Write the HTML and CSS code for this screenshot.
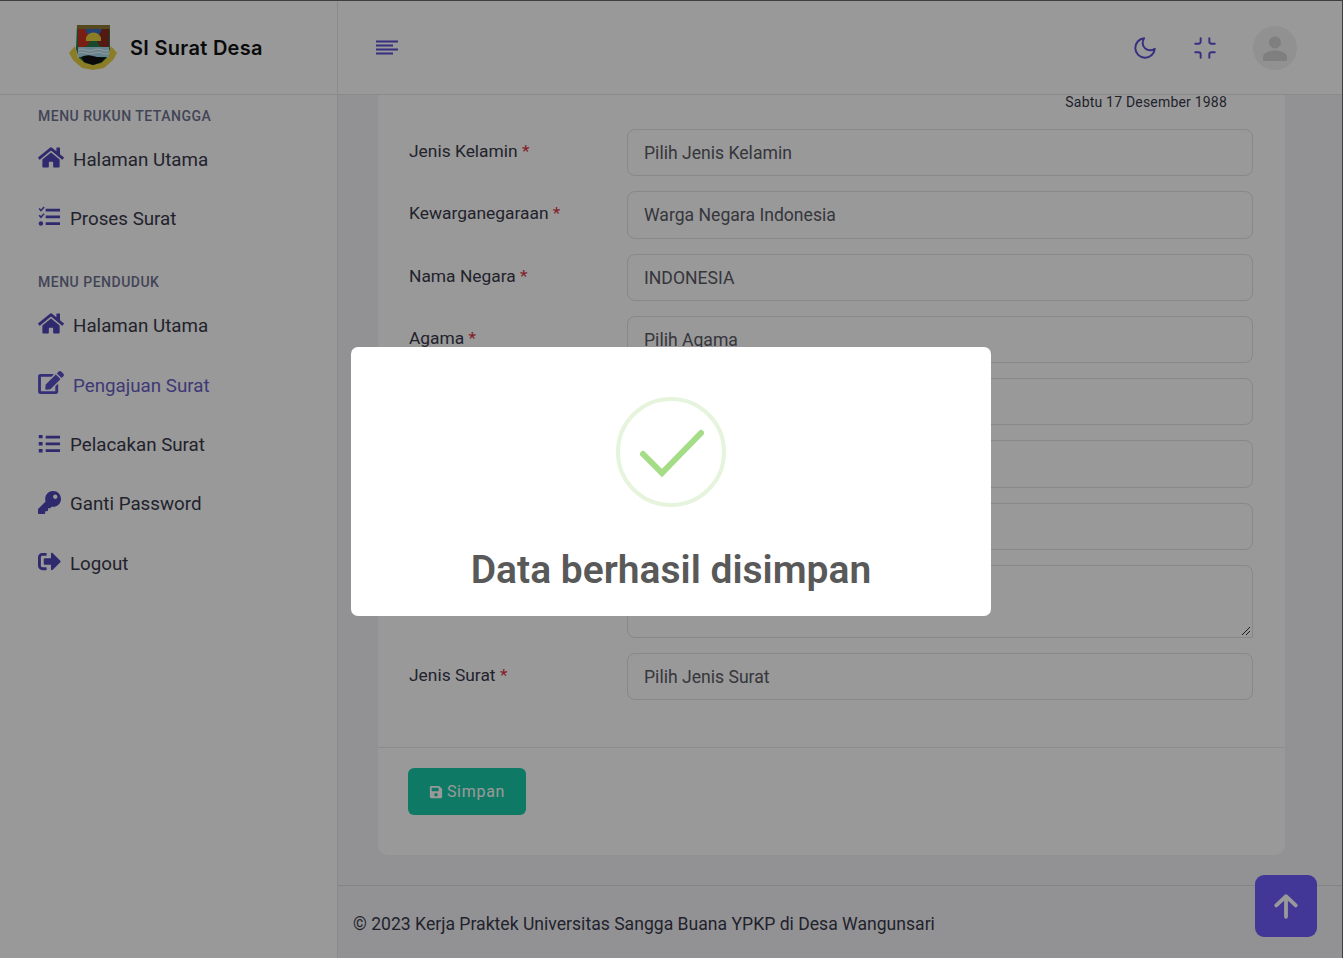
FILE: index.html
```html
<!DOCTYPE html>
<html lang="id">
<head>
<meta charset="utf-8">
<title>SI Surat Desa</title>
<link rel="stylesheet" href="styles.css">
</head>
<body>
<div class="app">
  <header class="topbar">
    <div class="brand">
      <svg class="crest" viewBox="0 0 50 48" width="50" height="48">
        <path d="M1 29l6-7 3 12 30 0 3-12 6 7-4 7-9 8-11 2-11-2-9-8z" fill="#e6d040"/>
        <path d="M9 1h33v24l-3 9-6 5-8 2-8-2-6-5-3-9z" fill="#2a7a4c"/>
        <path d="M9 1h33v4H9z" fill="#8a7a30"/>
        <path d="M10 5h8l6 9-5 8-9 3z" fill="#c8321e"/>
        <path d="M41 5h-8l-6 9 5 8 9 3z" fill="#8c2a1e"/>
        <path d="M17 5h17l-4 8H21z" fill="#3a6ec0"/>
        <path d="M18 15a7 6 0 0 1 15 0v2H18z" fill="#e8d040"/>
        <path d="M10 23h31v10H10z" fill="#a8dcec"/>
        <path d="M10 26q4-2 8 0t8 0 8 0 7 0M10 29q4-2 8 0t8 0 8 0 7 0" stroke="#fff" fill="none"/>
        <path d="M13 33q6-3 12-1t13 1l-4 5-9 3-9-3z" fill="#111"/>
      </svg>
      <span class="brand-name">SI Surat Desa</span>
    </div>
    <div class="topbar-main">
      <button class="icon-btn" aria-label="Menu">
        <svg width="22" height="24" viewBox="0 0 22 24" fill="none" stroke="#5b4fd6" stroke-width="2"><path d="M0 5.500h22M0 9.500h17M0 13.500h22M0 17.500h17"/></svg>
      </button>
      <div class="topbar-actions">
        <svg width="26" height="26" viewBox="0 0 24 24" fill="none" stroke="#5b4fd6" stroke-width="1.800" stroke-linecap="round" stroke-linejoin="round"><path d="M21 12.790A9 9 0 1 1 11.210 3 7 7 0 0 0 21 12.790z"/></svg>
        <svg width="26" height="26" viewBox="0 0 24 24" fill="none" stroke="#5b4fd6" stroke-width="1.800" stroke-linecap="round" stroke-linejoin="round"><path d="M8 3v3a2 2 0 0 1-2 2H3M21 8h-3a2 2 0 0 1-2-2V3M3 16h3a2 2 0 0 1 2 2v3M16 21v-3a2 2 0 0 1 2-2h3"/></svg>
        <span class="avatar">
          <svg width="28" height="28" viewBox="0 0 28 28" fill="#d4d4d4"><circle cx="14" cy="8.500" r="6"/><path d="M2 27v-4c0-4 6-6.500 12-6.500s12 2.500 12 6.500v4z"/></svg>
        </span>
      </div>
    </div>
  </header>

  <div class="body-row">
    <aside class="sidebar">
      <div class="menu-title first">MENU RUKUN TETANGGA</div>
      <a class="menu-item wide item-a">
        <svg class="mi" viewBox="0 0 576 512" width="26" height="23"><path d="M280.370 148.260L96 300.110V464a16 16 0 0 0 16 16l112.060-.290a16 16 0 0 0 15.920-16V368a16 16 0 0 1 16-16h64a16 16 0 0 1 16 16v95.640a16 16 0 0 0 16 16.050L464 480a16 16 0 0 0 16-16V300L295.670 148.260a12.190 12.190 0 0 0-15.300 0zM571.600 251.470L488 182.560V44.050a12 12 0 0 0-12-12h-56a12 12 0 0 0-12 12v72.610L318.470 43a48 48 0 0 0-61 0L4.340 251.470a12 12 0 0 0-1.600 16.900l25.500 31A12 12 0 0 0 45.150 301l235.220-193.740a12.190 12.190 0 0 1 15.300 0L530.900 301a12 12 0 0 0 16.900-1.600l25.500-31a12 12 0 0 0-1.700-16.930z"/></svg>
        <span>Halaman Utama</span>
      </a>
      <a class="menu-item item-b">
        <svg class="mi" viewBox="0 0 24 24" width="23" height="23"><path d="M8 4h15v2.800H8zM8 11h15v2.800H8zM8 18h15v2.800H8z"/><circle cx="3" cy="19.300" r="2.300"/><path d="M.6 4.200l1.200-1 1.300 1.400L5.800 1.500l1.200 1-3.900 4.500zM.6 11.200l1.200-1 1.300 1.400 2.700-3.100 1.200 1-3.900 4.500z"/></svg>
        <span>Proses Surat</span>
      </a>
      <div class="menu-title second">MENU PENDUDUK</div>
      <a class="menu-item wide item-a">
        <svg class="mi" viewBox="0 0 576 512" width="26" height="23"><path d="M280.370 148.260L96 300.110V464a16 16 0 0 0 16 16l112.060-.290a16 16 0 0 0 15.920-16V368a16 16 0 0 1 16-16h64a16 16 0 0 1 16 16v95.640a16 16 0 0 0 16 16.050L464 480a16 16 0 0 0 16-16V300L295.670 148.260a12.190 12.190 0 0 0-15.300 0zM571.600 251.470L488 182.560V44.050a12 12 0 0 0-12-12h-56a12 12 0 0 0-12 12v72.610L318.470 43a48 48 0 0 0-61 0L4.340 251.470a12 12 0 0 0-1.600 16.900l25.500 31A12 12 0 0 0 45.150 301l235.220-193.740a12.190 12.190 0 0 1 15.300 0L530.900 301a12 12 0 0 0 16.900-1.600l25.500-31a12 12 0 0 0-1.700-16.930z"/></svg>
        <span>Halaman Utama</span>
      </a>
      <a class="menu-item wide active">
        <svg class="mi" viewBox="0 0 576 512" width="26" height="23"><path d="M402.600 83.200l90.200 90.200c3.800 3.800 3.800 10 0 13.800L274.400 405.600l-92.800 10.300c-12.400 1.400-22.900-9.100-21.500-21.500l10.300-92.800L388.800 83.200c3.800-3.800 10-3.800 13.800 0zm162-22.900l-48.800-48.800c-15.200-15.200-39.900-15.200-55.200 0l-35.400 35.400c-3.800 3.800-3.800 10 0 13.800l90.200 90.200c3.800 3.800 10 3.800 13.800 0l35.400-35.400c15.200-15.300 15.200-40 0-55.200zM384 346.200V448H64V128h229.800c3.200 0 6.200-1.300 8.500-3.500l40-40c7.600-7.600 2.200-20.500-8.500-20.500H48C21.500 64 0 85.500 0 112v352c0 26.500 21.500 48 48 48h352c26.500 0 48-21.500 48-48V306.200c0-10.700-12.900-16-20.500-8.500l-40 40c-2.200 2.300-3.500 5.300-3.500 8.500z"/></svg>
        <span>Pengajuan Surat</span>
      </a>
      <a class="menu-item item-b">
        <svg class="mi" viewBox="0 0 24 24" width="23" height="23"><path d="M8 4h15v2.800H8zM8 11h15v2.800H8zM8 18h15v2.800H8z"/><path d="M.8 3h4v3.600h-4zM.8 10.400h4V14h-4zM.8 17.700h4v3.600h-4z"/></svg>
        <span>Pelacakan Surat</span>
      </a>
      <a class="menu-item item-b">
        <svg class="mi" viewBox="0 0 512 512" width="23" height="23"><path d="M512 176.001C512 273.203 433.202 352 336 352c-11.220 0-22.190-1.062-32.827-3.069l-24.012 27.014A23.999 23.999 0 0 1 261.223 384H224v40c0 13.255-10.745 24-24 24h-40v40c0 13.255-10.745 24-24 24H24c-13.255 0-24-10.745-24-24v-78.059c0-6.365 2.529-12.470 7.029-16.971l161.802-161.802C163.108 213.814 160 195.271 160 176 160 78.798 238.797.001 335.999 0 433.488-.001 512 78.511 512 176.001zM336 128c0 26.510 21.490 48 48 48s48-21.490 48-48-21.490-48-48-48-48 21.490-48 48z"/></svg>
        <span>Ganti Password</span>
      </a>
      <a class="menu-item item-b">
        <svg class="mi" viewBox="0 0 512 512" width="23" height="23"><path d="M497 273L329 441c-15 15-41 4.500-41-17v-96H152c-13.300 0-24-10.700-24-24v-96c0-13.300 10.700-24 24-24h136V88c0-21.400 25.900-32 41-17l168 168c9.300 9.400 9.300 24.600 0 34zM192 436v-40c0-6.600-5.400-12-12-12H96c-17.700 0-32-14.300-32-32V160c0-17.700 14.300-32 32-32h84c6.600 0 12-5.400 12-12V76c0-6.600-5.400-12-12-12H96c-53 0-96 43-96 96v192c0 53 43 96 96 96h84c6.600 0 12-5.400 12-12z"/></svg>
        <span>Logout</span>
      </a>
    </aside>

    <main class="main">
      <section class="card">
        <div class="date-row">Sabtu 17 Desember 1988</div>
        <div class="form">
          <div class="row"><label>Jenis Kelamin <em>*</em></label><div class="field">Pilih Jenis Kelamin</div></div>
          <div class="row"><label>Kewarganegaraan <em>*</em></label><div class="field">Warga Negara Indonesia</div></div>
          <div class="row"><label>Nama Negara <em>*</em></label><div class="field">INDONESIA</div></div>
          <div class="row"><label>Agama <em>*</em></label><div class="field">Pilih Agama</div></div>
          <div class="row"><label></label><div class="field"></div></div>
          <div class="row"><label></label><div class="field"></div></div>
          <div class="row"><label></label><div class="field"></div></div>
          <div class="row"><label></label><div class="field area">
            <svg class="grip" width="10" height="10" viewBox="0 0 10 10" stroke="#333" fill="none"><path d="M1 9l8-8M5 9l4-4"/></svg>
          </div></div>
          <div class="row"><label>Jenis Surat <em>*</em></label><div class="field">Pilih Jenis Surat</div></div>
        </div>
        <div class="card-footer">
          <button class="save">
            <svg width="14" height="14" viewBox="0 0 448 512" fill="#fff"><path d="M433.900 129.900l-83.900-83.900A48 48 0 0 0 316.100 32H48C21.500 32 0 53.500 0 80v352c0 26.500 21.500 48 48 48h352c26.500 0 48-21.500 48-48V163.900a48 48 0 0 0-14.100-34zM224 416c-35.300 0-64-28.700-64-64 0-35.300 28.700-64 64-64s64 28.700 64 64c0 35.300-28.700 64-64 64zm96-304.500V212c0 6.600-5.400 12-12 12H76c-6.600 0-12-5.400-12-12V108c0-6.600 5.400-12 12-12h228.500c3.200 0 6.200 1.300 8.500 3.500l3.500 3.500a12 12 0 0 1 3.500 8.500z"/></svg>
            <span>Simpan</span>
          </button>
        </div>
      </section>
      <footer class="footer">© 2023 Kerja Praktek Universitas Sangga Buana YPKP di Desa Wangunsari</footer>
    </main>
  </div>

  <button class="to-top" aria-label="Ke atas">
    <svg width="26" height="26" viewBox="0 0 24 24" fill="none" stroke="#fff" stroke-width="3.500" stroke-linecap="round" stroke-linejoin="round"><path d="M12 22V3M3 11.500L12 3l9 8.500"/></svg>
  </button>
</div>

<div class="overlay">
  <div class="modal">
    <svg class="check" width="110" height="110" viewBox="0 0 110 110" fill="none">
      <circle cx="55" cy="55" r="53" stroke="#e6f4de" stroke-width="4"/>
      <path d="M27 57l19 19 39-40" stroke="#a5dc86" stroke-width="6" stroke-linecap="round"/>
    </svg>
    <h2>Data berhasil disimpan</h2>
  </div>
</div>
</body>
</html>
```
FILE: styles.css
```css
* { box-sizing: border-box; }
html, body { margin: 0; height: 100%; overflow: hidden; }
body {
  font-family: Roboto, "Noto Sans", sans-serif;
  color: #3a3a4c;
  background: #f3f4f7;
}
.app { height: 958px; display: flex; flex-direction: column; position: relative; border-top: 1px solid #6a6a6a; border-right: 1px solid #6a6a6a; overflow: hidden; }

.topbar { height: 94px; flex: none; display: flex; background: #fff; border-bottom: 1px solid #e6e6e9; }
.brand { width: 338px; flex: none; display: flex; align-items: center; padding-left: 68px; gap: 12px; border-right: 1px solid #e6e6e9; }
.brand-name { font-family: Inter, sans-serif; font-weight: 600; font-size: 20px; letter-spacing: .3px; color: #111; }
.topbar-main { flex: 1; display: flex; align-items: center; justify-content: space-between; padding: 0 45px 0 38px; }
.icon-btn { border: 0; background: none; padding: 0; display: flex; }
.topbar-actions { display: flex; align-items: center; gap: 34px; }
.avatar { width: 44px; height: 44px; border-radius: 50%; background: #f2f2f2; display: flex; align-items: center; justify-content: center; margin-left: 1px; overflow: hidden; }

.body-row { flex: 1; display: flex; min-height: 0; }
.sidebar { width: 338px; flex: none; background: #fff; border-right: 1px solid #e6e6e9; padding: 13px 0 0 38px; }
.menu-title { font-size: 14px; font-weight: 500; line-height: 16px; color: #6e7391; letter-spacing: .5px; margin-bottom: 6px; }
.menu-title.second { margin-top: 26px; }
.menu-item { display: flex; align-items: center; gap: 9px; font-size: 18.750px; line-height: 24px; height: 59.400px; color: #3a3a4c; }
.menu-item .mi { fill: #4f46b8; flex: none; position: relative; top: -2px; }
.menu-item.active { color: #6a60c6; height: 60px; padding-top: 1px; }
.menu-item.active .mi { fill: #5b50c8; top: -3px; }
.menu-item.item-a { height: 59px; }

.main { flex: 1; min-width: 0; display: flex; flex-direction: column; background: #f3f4f7; }
.card { margin: 0 57px 0 40px; height: 760px; flex: none; background: #fff; border-radius: 0 0 10px 10px; display: flex; flex-direction: column; }
.date-row { height: 34px; padding: 0 58px 0 0; text-align: right; font-size: 14px; letter-spacing: .2px; line-height: 15px; color: #3a3a4c; }
.form { padding: 0 32px 0 31px; flex: 1; display: flex; flex-direction: column; gap: 15px; }
.row { display: flex; align-items: flex-start; }
.row label { width: 218px; flex: none; font-size: 17.400px; line-height: 24px; margin-top: 10px; color: #3a3a4c; }
.row em { color: #dc3545; font-style: normal; }
.field { flex: 1; height: 47.250px; border: 1px solid #e3e3e6; border-radius: 8px; background: #fff; padding: 0 16px; font-size: 17.600px; line-height: 46px; color: #5a5a66; position: relative; }
.field.area { height: 73px; border-radius: 8px 8px 0 8px; }
.grip { position: absolute; right: 1px; bottom: 1px; }
.card-footer { height: 108px; border-top: 1px solid #e9e9ec; padding: 20px 30px; flex: none; }
.save { width: 118px; height: 47px; border: 0; border-radius: 6px; background: #18cca9; color: #fff; display: flex; align-items: center; justify-content: center; gap: 4px; font: 400 16px Roboto, sans-serif; letter-spacing: .7px; }

.footer { margin-top: 30px; flex: 1; border-top: 1px solid #dcdce0; padding: 25px 0 0 15px; font-size: 17.600px; line-height: 26px; color: #3a3a4c; }
.to-top { position: absolute; right: 25px; bottom: 21px; width: 62px; height: 62px; border: 0; border-radius: 9px; background: #6e5dfa; display: flex; align-items: center; justify-content: center; padding: 0; }

.overlay { position: fixed; inset: 0; background: rgba(0,0,0,.4); display: flex; align-items: center; justify-content: center; padding-top: 5px; }
.modal { width: 640px; height: 269px; background: #fff; border-radius: 7px; display: flex; flex-direction: column; align-items: center; padding-top: 50px; margin-left: -1px; }
.modal h2 { margin: 39px 0 0; font-size: 39px; line-height: 48px; font-weight: 600; color: #595959; white-space: nowrap; }
```
